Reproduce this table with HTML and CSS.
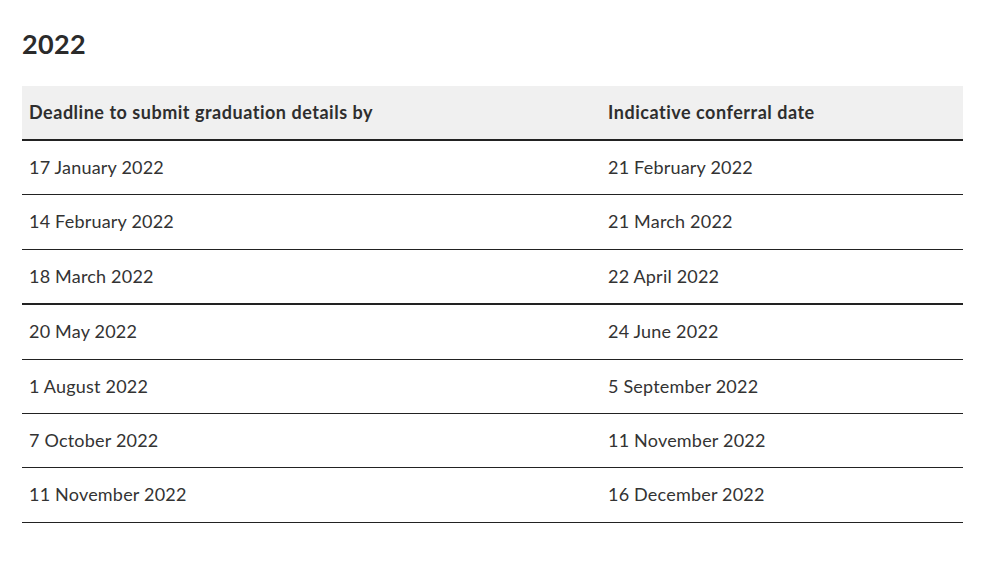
FILE: index.html
```html
<!DOCTYPE html>
<html>
<head>
<meta charset="utf-8">
<link rel="stylesheet" href="styles.css">
</head>
<body>
<section class="page">
  <h2 class="year">2022</h2>
  <table class="dates">
    <thead>
      <tr><th class="col-a">Deadline to submit graduation details by</th><th>Indicative conferral date</th></tr>
    </thead>
    <tbody>
      <tr><td>17 January 2022</td><td>21 February 2022</td></tr>
      <tr><td>14 February 2022</td><td>21 March 2022</td></tr>
      <tr class="thick"><td>18 March 2022</td><td>22 April 2022</td></tr>
      <tr><td>20 May 2022</td><td>24 June 2022</td></tr>
      <tr><td>1 August 2022</td><td>5 September 2022</td></tr>
      <tr><td>7 October 2022</td><td>11 November 2022</td></tr>
      <tr><td>11 November 2022</td><td>16 December 2022</td></tr>
    </tbody>
  </table>
</section>
</body>
</html>
```
FILE: styles.css
```css
html, body { margin: 0; padding: 0; background: #fff; }
body { font-family: "Lato", "Liberation Sans", sans-serif; color: #333; }
.page { padding: 22px 27px 0 22px; }
.year { margin: 0 0 20px; font-size: 27px; font-weight: 700; line-height: 44px; color: #2b2b2b; letter-spacing: 0.3px; }
.dates { width: 941px; border-collapse: collapse; font-size: 18px; }
.dates th { background: #f0f0f0; text-align: left; font-weight: 700; padding: 15px 7px 16px; line-height: 22px; border-bottom: 2px solid #222; color: #2e2e2e; letter-spacing: 0.52px; }
.dates .col-a { width: 565px; }
.dates td { padding: 16px 7px; line-height: 21.4px; border-bottom: 1px solid #222; letter-spacing: 0.2px; }
.dates tr.thick td { border-bottom: 2px solid #222; }
```
